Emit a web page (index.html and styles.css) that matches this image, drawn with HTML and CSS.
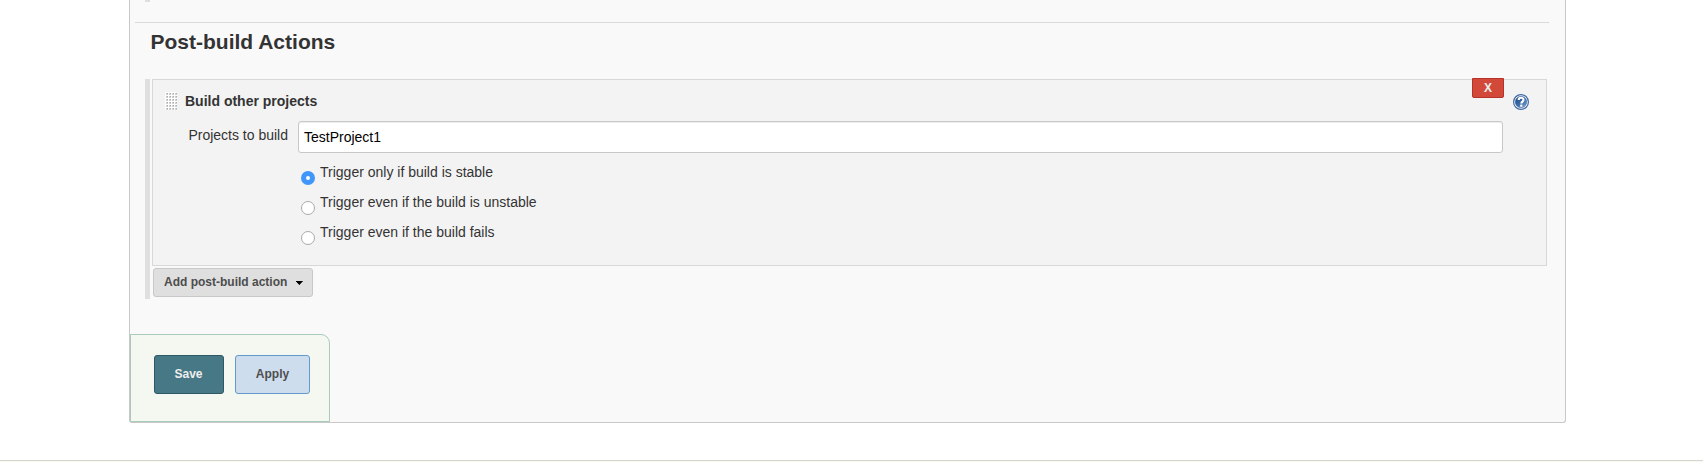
FILE: index.html
```html
<!DOCTYPE html>
<html lang="en">
<head>
<meta charset="utf-8">
<title>Post-build Actions</title>
<link rel="stylesheet" href="styles.css">
</head>
<body>
<main class="panel">
  <div class="strip-end"></div>
  <hr class="divider">
  <h2 class="heading">Post-build Actions</h2>
  <section class="actions">
    <div class="card">
      <button class="delete">X</button>
      <div class="card-head">
        <svg class="grip" width="12" height="18" viewBox="0 0 12 18">
          <defs><pattern id="dots" width="3" height="3" patternUnits="userSpaceOnUse">
            <rect width="3" height="3" fill="#fff"/><rect x="1" y="1" width="2" height="2" fill="#d0d0d0"/><rect x="2" y="1" width="1" height="1" fill="#aaa"/>
          </pattern></defs>
          <rect width="12" height="18" fill="url(#dots)"/>
        </svg>
        <strong class="card-title">Build other projects</strong>
        <svg class="help" width="16" height="16" viewBox="0 0 16 16">
          <defs><linearGradient id="blue" x1="0" y1="0" x2="1" y2="1"><stop offset="0" stop-color="#204a87"/><stop offset=".45" stop-color="#3465a4"/><stop offset="1" stop-color="#7fa5cf"/></linearGradient></defs>
          <circle cx="8" cy="8" r="7.4" fill="#fff" stroke="#3f68a3" stroke-width="1.2"/>
          <circle cx="8" cy="8" r="5.8" fill="url(#blue)" stroke="#31598f" stroke-width=".4"/>
          <path d="M5.7 6C5.7 3 10.5 3.1 10.5 5.8C10.5 7.6 8.3 7.6 8.3 9.6" fill="none" stroke="#fff" stroke-width="2.1"/>
          <rect x="7.2" y="10.6" width="2.2" height="2.2" fill="#fff"/>
        </svg>
      </div>
      <div class="field">
        <label class="label" for="projects">Projects to build</label>
        <input class="input" id="projects" type="text" value="TestProject1">
      </div>
      <div class="options">
        <label class="option"><span class="radio radio-on"></span><span class="option-text">Trigger only if build is stable</span></label>
        <label class="option"><span class="radio"></span><span class="option-text">Trigger even if the build is unstable</span></label>
        <label class="option"><span class="radio"></span><span class="option-text">Trigger even if the build fails</span></label>
      </div>
    </div>
    <button class="add"><span>Add post-build action</span><svg width="7" height="4" viewBox="0 0 7 4"><path d="M0 0H7V1H6V2H5V3H4V4H3V3H2V2H1V1H0Z" fill="#000"/></svg></button>
  </section>
  <div class="bottom-bar">
    <button class="btn save">Save</button>
    <button class="btn apply">Apply</button>
  </div>
</main>
<footer class="footer"></footer>
</body>
</html>
```
FILE: styles.css
```css
* { box-sizing: border-box; }
html, body { height: 100%; overflow: hidden; }
body {
  margin: 0;
  background: #fff;
  color: #333;
  font: 14px/20px "Liberation Sans", Arial, sans-serif;
}
button { font-family: inherit; font-weight: bold; padding: 0; }
.panel {
  display: flex;
  flex-direction: column;
  width: 1437px;
  height: 423px;
  margin-left: 129px;
  background: #f9f9f9;
  border: 1px solid #c8c8c8;
  border-top: 0;
  border-radius: 0 0 3px 3px;
}
.strip-end { width: 5px; height: 2px; margin-left: 15px; background: #dfdfdf; }
.divider { width: 1414px; height: 1px; margin: 20px 0 0 5px; border: 0; background: #dadada; }
.heading {
  margin: 5px 0 0 20.5px;
  height: 51px;
  font-size: 21px;
  line-height: 28px;
}
.actions {
  width: 1402px;
  height: 220px;
  margin-left: 15px;
  padding-left: 2px;
  border-left: 5px solid #dfdfdf;
}
.card {
  position: relative;
  height: 187px;
  padding: 12px 0 0 12px;
  background: #f3f3f3;
  border: 1px solid #d8d8d8;
}
.card-head { display: flex; height: 29px; align-items: flex-start; }
.card-title { margin: -1px 0 0 8px; }
.help { margin: 2px 17px 0 auto; }
.delete {
  position: absolute;
  top: -2px;
  right: 42px;
  width: 32px;
  height: 20px;
  color: #eee;
  background: #d24939;
  border: 1px solid #b8322c;
  border-radius: 0 0 2px 2px;
  font-size: 12px;
  line-height: 18px;
}
.field { display: flex; }
.label { width: 123px; margin: 4px 10px 0 0; text-align: right; }
.input {
  width: 1205px;
  height: 32px;
  padding: 0 5px;
  border: 1px solid #c8c8c8;
  border-radius: 3px;
  background: #fff;
  box-shadow: inset 0 1px 1px #eee;
  color: #000;
  font: 14px "Liberation Sans", Arial, sans-serif;
}
.options { display: flex; flex-direction: column; margin: 9px 0 0 136px; }
.option { display: flex; gap: 5px; height: 30px; }
.radio {
  width: 14px;
  height: 14px;
  margin-top: 9px;
  border: 1px solid #aaa;
  border-radius: 50%;
  background: #fff;
}
.radio-on { border: 5px solid #4096fa; }
.add {
  display: flex;
  align-items: center;
  gap: 9px;
  width: 160px;
  height: 29px;
  margin: 2px 0 0 1px;
  padding: 0 9px 1px 10px;
  color: #4d4d4d;
  background: #dfdfdf;
  border: 1px solid #c8c8c8;
  border-radius: 3px;
  font-size: 12px;
  white-space: nowrap;
}
.add svg { margin-top: 2px; }
.bottom-bar {
  display: flex;
  gap: 11px;
  width: 200px;
  height: 88px;
  margin-top: auto;
  padding: 20px 0 0 23px;
  background: #f5f8f1;
  border: 1px solid #a9cbbc;
  border-radius: 0 9px 0 0;
}
.btn { height: 39px; padding-bottom: 2px; border-radius: 3px; font-size: 12px; }
.save { width: 70px; padding-right: 1px; color: #eee; background: #477885; border: 1px solid #2d5966; }
.apply { width: 75px; color: #4d4d4d; background: #cddded; border: 1px solid #6399cc; }
.footer { height: 2px; margin-top: 37px; border-top: 1px solid #d3d7cf; background: #f6faf2; }
```
